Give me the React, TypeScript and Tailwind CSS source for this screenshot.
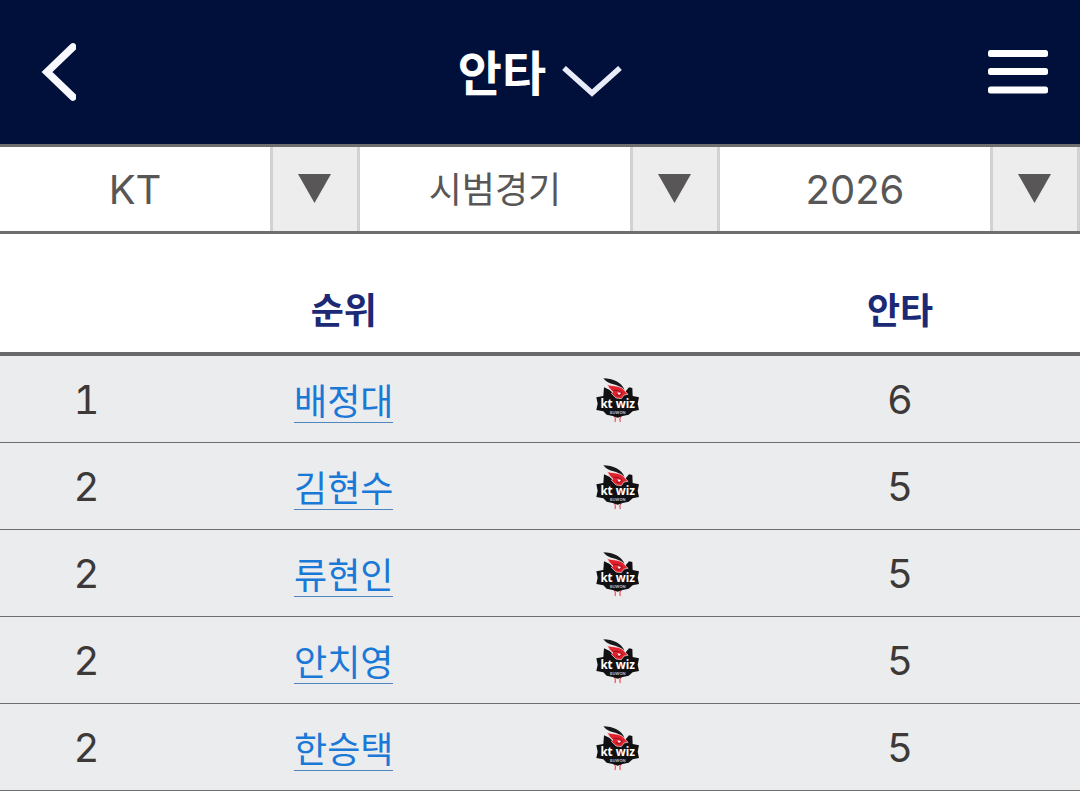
import { useState } from "react";

/* ================= TYPES ================= */

interface PlayerRow {
  rank: number;
  name: string;
  hits: number;
}

interface FilterProps {
  label: string;
  options: string[];
  textClass: string;
}

/* ================= DATA ================= */

const PLAYERS: PlayerRow[] = [
  { rank: 1, name: "배정대", hits: 6 },
  { rank: 2, name: "김현수", hits: 5 },
  { rank: 2, name: "류현인", hits: 5 },
  { rank: 2, name: "안치영", hits: 5 },
  { rank: 2, name: "한승택", hits: 5 },
];

/* ================= ICONS ================= */

function TeamLogo() {
  return (
    <svg
      viewBox="52 54 129 135"
      className="mx-auto h-[45px] w-[43px]"
      role="img"
      aria-label="kt wiz"
    >
      {/* ball */}
      <circle cx="117" cy="175" r="13" fill="#f6eaeb" />
      <path
        d="M107 168 Q113 177 109 186 M127 168 Q121 177 125 186"
        fill="none"
        stroke="#dd5f69"
        strokeWidth="4"
      />
      {/* shield */}
      <path
        d="M76 82 L92 89 L104 100 L136 100 L151 82 L161 84 L162 108 L181 112 L177 131 L181 150 L162 154 L150 164 L132 168 L117 173 L102 168 L84 164 L74 154 L53 150 L57 131 L53 112 L74 108 Z"
        fill="#111113"
      />
      {/* feather */}
      <path
        d="M74 55 C102 56 130 66 138 92 C124 77 106 74 94 70 C86 67 79 62 74 55 Z"
        fill="#18181a"
      />
      <path
        d="M86 74 C104 79 128 76 137 91 L148 103 L136 105 L128 116 L112 114 L98 100 L103 96 C96 90 91 84 86 74 Z"
        fill="#e3212d"
        stroke="#f5e3e4"
        strokeWidth="2"
      />
      <path
        d="M104 92 C114 89 124 92 131 99 L122 108 L112 104"
        fill="none"
        stroke="#8f1420"
        strokeWidth="3"
      />
      <path d="M116 97 L127 99 L121 105 Z" fill="#ffffff" />
      <text
        x="117"
        y="143"
        textAnchor="middle"
        fontSize="35"
        fill="#ffffff"
        className="font-['Open_Sans',sans-serif] font-bold"
      >
        kt wiz
      </text>
      <text
        x="117"
        y="161"
        textAnchor="middle"
        fontSize="12"
        fill="#b9b9bd"
        className="font-['Inter',sans-serif] font-bold"
      >
        SUWON
      </text>
    </svg>
  );
}

/* ================= FILTER ================= */

function Filter({ label, options, textClass }: FilterProps) {
  const [value, setValue] = useState(options[0]);

  return (
    <label className="relative flex h-[84px] flex-1">
      <select
        aria-label={label}
        value={value}
        onChange={(e) => setValue(e.target.value)}
        className={`w-full appearance-none bg-white pt-0.5 pr-[90px] text-center text-[#585656] outline-none [text-align-last:center] ${textClass}`}
      >
        {options.map((o) => (
          <option key={o} value={o}>
            {o}
          </option>
        ))}
      </select>
      <span className="pointer-events-none absolute inset-y-0 right-0 flex w-[90px] items-center justify-center border-x-[3px] border-[#d2d2d2] bg-[#ededed]">
        <svg viewBox="0 0 34 30" className="h-[30px] w-[34px]">
          <path d="M0 0 H33 L16.5 29 Z" fill="#585656" />
        </svg>
      </span>
    </label>
  );
}

/* ================= PAGE ================= */

export default function App() {
  return (
    <div className="min-h-screen bg-white font-['Inter','Noto_Sans_CJK_KR',sans-serif]">
      {/* HEADER */}
      <header className="flex h-36 items-center justify-between bg-[#00103a] px-8 text-white">
        <button type="button" aria-label="뒤로" className="flex w-20 px-2">
          <svg viewBox="0 0 36 60" className="h-[60px] w-9">
            <path
              d="M33 5 L7 30 L33 55"
              fill="none"
              stroke="#f8f8ff"
              strokeWidth="7.5"
              strokeLinecap="round"
              strokeLinejoin="miter"
            />
          </svg>
        </button>

        <button type="button" className="flex items-center gap-4">
          <h1 className="pt-1 text-5xl font-bold">안타</h1>
          <svg viewBox="0 0 60 32" className="mt-5 h-8 w-[60px]">
            <path
              d="M2 2 L30 27 L58 2"
              fill="none"
              stroke="#e9ebf8"
              strokeWidth="5.5"
            />
          </svg>
        </button>

        <button type="button" aria-label="메뉴" className="flex w-20 justify-end">
          <svg viewBox="0 0 60 44" className="h-11 w-[60px]" fill="#ffffff">
            <rect y="0" width="60" height="7" rx="2.5" />
            <rect y="18" width="60" height="7" rx="2.5" />
            <rect y="36.5" width="60" height="7" rx="2.5" />
          </svg>
        </button>
      </header>

      {/* FILTERS */}
      <div className="flex border-y-[3px] border-[#6e6e70]">
        <Filter label="팀" options={["KT"]} textClass="text-[40px]" />
        <Filter label="경기 구분" options={["시범경기"]} textClass="text-4xl" />
        <Filter label="시즌" options={["2026"]} textClass="text-[40px]" />
      </div>

      {/* RANKING */}
      <table className="w-full table-fixed border-separate border-spacing-0 text-center">
        <thead>
          <tr className="h-[122px] text-4xl text-[#1c2a75] [&>*]:border-b-4 [&>*]:border-[#69696b] [&>*]:pt-9">
            <td className="w-[16%]" />
            <th scope="col" className="font-bold">
              순위
            </th>
            <td className="w-[19%]" />
            <th scope="col" className="w-1/3 font-bold">
              안타
            </th>
          </tr>
        </thead>
        <tbody>
          {PLAYERS.map((p) => (
            <tr
              key={p.name}
              className="h-[87px] bg-[#ebecee] text-[40px] leading-none text-[#3c3938] tabular-nums [&>td]:border-b [&>td]:border-[#6e6e70] [&>td]:pt-0.5"
            >
              <td>{p.rank}</td>
              <td>
                <a
                  href="#"
                  className="inline-block border-b border-[#4f86bd] pt-1 text-4xl leading-10 text-[#1a78d6]"
                >
                  {p.name}
                </a>
              </td>
              <td>
                <TeamLogo />
              </td>
              <td>{p.hits}</td>
            </tr>
          ))}
        </tbody>
      </table>
    </div>
  );
}
